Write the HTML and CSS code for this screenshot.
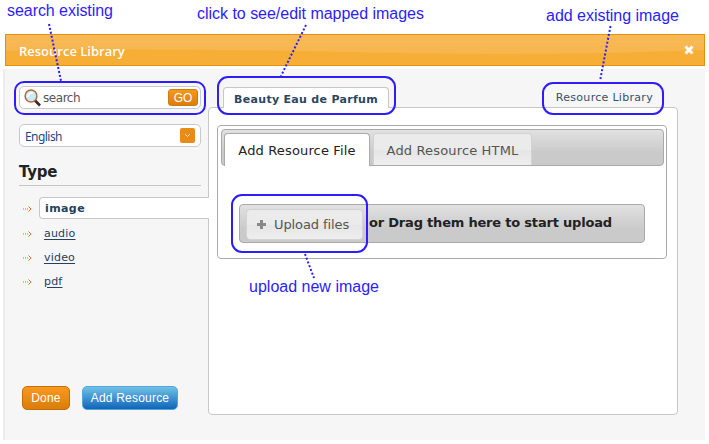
FILE: index.html
```html
<!DOCTYPE html>
<html lang="en">
<head>
<meta charset="utf-8">
<title>Resource Library</title>
<link rel="stylesheet" href="styles.css">
</head>
<body>
<div class="dialog">
  <header class="titlebar">
    <svg class="sheen" viewBox="0 0 698 30" preserveAspectRatio="none"><path d="M0 16Q100 12 340 17Q520 22 698 15V30H0z" fill="#f6ae37"/></svg>
    <h1>Resource Library</h1>
    <svg class="close" width="10" height="10" viewBox="0 0 10 10"><path d="M1.500 1.500l7 7M8.500 1.500l-7 7" stroke="#fff" stroke-width="2.900"/></svg>
  </header>
  <div class="body">
    <aside class="sidebar">
      <div class="field search">
        <svg width="18" height="18" viewBox="0 0 18 18"><path d="M10.500 11l5.500 5.500" stroke="#3b2a24" stroke-width="2.600"/><circle cx="7" cy="7" r="5.900" fill="#c8ebfa" stroke="#b5683f" stroke-width="1.500"/><path d="M4 8a4 4 0 0 1 5-4" stroke="#fff" stroke-width="2" fill="none"/></svg>
        <span class="query">search</span>
        <button class="go">GO</button>
      </div>
      <div class="field language">
        <span>English</span>
        <i class="drop"><svg width="7" height="5" viewBox="0 0 7 5"><path d="M1 1l2.500 2.500L6 1" stroke="#ffe3b5" fill="none"/></svg></i>
      </div>
      <h2>Type</h2>
      <ul class="types">
        <li class="active"><svg class="arrow" viewBox="0 0 9 6"><path d="M0 3h6" stroke-dasharray="1 1"/><path d="M5.500 .500L8 3 5.500 5.500"/></svg><a>image</a></li>
        <li><svg class="arrow" viewBox="0 0 9 6"><path d="M0 3h6" stroke-dasharray="1 1"/><path d="M5.500 .500L8 3 5.500 5.500"/></svg><a>audio</a></li>
        <li><svg class="arrow" viewBox="0 0 9 6"><path d="M0 3h6" stroke-dasharray="1 1"/><path d="M5.500 .500L8 3 5.500 5.500"/></svg><a>video</a></li>
        <li><svg class="arrow" viewBox="0 0 9 6"><path d="M0 3h6" stroke-dasharray="1 1"/><path d="M5.500 .500L8 3 5.500 5.500"/></svg><a>pdf</a></li>
      </ul>
      <div class="actions">
        <button class="done"><span>Done</span></button>
        <button class="add"><span>Add Resource</span></button>
      </div>
    </aside>
    <main class="main">
      <nav class="tabs">
        <a class="tab"><span>Beauty Eau de Parfum</span></a>
        <a class="library"><span>Resource Library</span></a>
      </nav>
      <section class="panel">
        <div class="uploader">
          <div class="inner-tabs">
            <a class="current"><span>Add Resource File</span></a>
            <a class="idle"><span>Add Resource HTML</span></a>
          </div>
          <div class="dropbar">
            <button class="upload"><svg width="9" height="9" viewBox="0 0 9 9"><path d="M4.500 0v9M0 4.500h9" stroke="#888" stroke-width="3"/></svg><span>Upload files</span></button>
            <strong><span>or Drag them here to start upload</span></strong>
          </div>
        </div>
      </section>
    </main>
  </div>
</div>
<svg class="notes" width="709" height="444" viewBox="0 0 709 444">
  <g class="rings">
    <rect x="15" y="82" width="190" height="32" rx="9"/>
    <rect x="218" y="77" width="177" height="37" rx="10"/>
    <rect x="543" y="83" width="120" height="31" rx="10"/>
    <rect x="232" y="195" width="135" height="57" rx="10"/>
  </g>
  <g class="leads">
    <path d="M49 24L61 81"/><path d="M306 25L281 76"/><path d="M610.500 26L600 81"/><path d="M305 254L314 278"/>
  </g>
  <text x="7" y="16" textLength="106">search existing</text>
  <text x="197" y="19" textLength="227">click to see/edit mapped images</text>
  <text x="546" y="21" textLength="133">add existing image</text>
  <text x="249" y="292" textLength="130">upload new image</text>
</svg>
</body>
</html>
```
FILE: styles.css
```css
* { box-sizing: border-box; }
body {
  margin: 0;
  width: 709px;
  height: 444px;
  overflow: hidden;
  background: #fff;
  font-family: "DejaVu Sans", sans-serif;
  font-size: 11px;
  color: #222;
}
span { white-space: nowrap; }
button { padding: 0; }
.dialog { padding: 34px 4px 0 3px; }
.titlebar {
  position: relative;
  display: flex;
  align-items: center;
  justify-content: space-between;
  height: 32px;
  margin: 0 0 0 2px;
  padding: 0 10px 0 13px;
  border: 1px solid #e78f08;
  background: linear-gradient(#f8ba56, #f6b348);
}
.sheen { position: absolute; left: 0; top: 0; width: 100%; height: 100%; }
h1 {
  position: relative;
  margin: 0;
  padding-top: 1px;
  font: 600 13px "Open Sans", sans-serif;
  letter-spacing: 0;
  color: #fff;
}
.close { position: relative; }
.body {
  display: flex;
  height: 371px;
  margin-top: 3px;
  border-left: 2px solid #ececec;
  background: #f6f6f6;
}
.sidebar { position: relative; z-index: 1; width: 204px; padding: 17px 0 0 14px; }
.field {
  display: flex;
  align-items: center;
  width: 182px;
  height: 23px;
  border: 1px solid #c6c9d2;
  border-radius: 5px;
  background: #fff;
}
.search { padding: 0 2px 0 4px; }
.query { flex: 1; padding-left: 1px; font: 12px "DejaVu Sans", sans-serif; letter-spacing: -.45px; color: #555; }
.go {
  width: 30px;
  height: 17px;
  border: 1px solid #cf7b0c;
  border-radius: 3px;
  background: linear-gradient(#f49820, #db7f0b);
  color: #fff;
  font: 12px "Liberation Sans", sans-serif;
}
.language { justify-content: space-between; margin-top: 15px; padding: 0 5px; color: #1b4c7e; font: 12px "Noto Sans", sans-serif; letter-spacing: -.55px; }
.language span { padding-top: 1px; }
.drop { display: grid; place-items: center; width: 15px; height: 15px; border-radius: 2px; background: #e98c16; }
h2 {
  width: 182px;
  height: 22px;
  margin: 17px 0 0;
  border-bottom: 1px solid #c7c7c7;
  font-size: 15px;
  letter-spacing: -.2px;
  line-height: 17px;
}
.types { margin: 10px 0 0; padding: 0; list-style: none; }
.types li { display: flex; align-items: center; height: 24px; padding-left: 4px; }
.types a { margin-left: 12px; color: #244162; letter-spacing: .2px; text-decoration: underline; text-underline-offset: 2px; }
.arrow { width: 9px; height: 6px; margin-top: 2px; fill: none; stroke: #ed6b25; }
.types .active { margin-bottom: 1px; }
.types .active a {
  flex: 1;
  height: 22px;
  margin-left: 7px;
  padding-left: 5px;
  border: 1px solid #c7c7c7;
  border-right: 0;
  border-radius: 4px 0 0 4px;
  background: #fff;
  font-weight: bold;
  letter-spacing: .4px;
  line-height: 21px;
  text-decoration: none;
}
.actions { display: flex; gap: 12px; margin: 93px 0 0 3px; }
.actions button {
  height: 24px;
  border-radius: 5px;
  color: #fff;
  font: 12px "Liberation Sans", sans-serif;
  letter-spacing: .2px;
}
.done { width: 48px; border: 1px solid #c66f08; background: linear-gradient(#fa981d, #d87e0d); }
.add { width: 96px; border: 1px solid #4fa8dc; background: linear-gradient(#6fc1e7, #1165b9); }
.main { width: 470px; margin-left: -1px; padding-top: 18px; }
.tabs { display: flex; justify-content: space-between; height: 20px; padding: 0 25px 0 15px; }
.tab {
  position: relative;
  width: 166px;
  height: 21px;
  border: 1px solid #c7c7c7;
  border-bottom: 0;
  border-radius: 4px 4px 0 0;
  background: #fff;
  text-align: center;
  font-weight: bold;
  letter-spacing: .3px;
  line-height: 23px;
  color: #2d465f;
}
.library { line-height: 21px; letter-spacing: .3px; color: #36506a; }
.panel { height: 308px; padding: 17px 9px; border: 1px solid #c7c7c7; border-radius: 4px; background: #fff; }
.uploader { width: 450px; height: 134px; margin-left: -1px; padding: 3px 2px 3px 3px; border: 1px solid #aaa; border-radius: 4px; }
.inner-tabs {
  display: flex;
  gap: 3px;
  height: 37px;
  padding: 3px 2px 0;
  border: 1px solid #aaa;
  border-radius: 4px;
  background: linear-gradient(#e1e1e1, #cacaca 65%);
  font-size: 13px;
  letter-spacing: .15px;
}
.inner-tabs a { text-align: center; line-height: 34px; border-radius: 4px 4px 0 0; }
.current { width: 146px; height: 33px; border: 1px solid #aaa; border-bottom: 0; background: #fff; }
.idle { width: 159px; height: 32px; border: 1px solid #d3d3d3; border-bottom: 0; background: linear-gradient(#ebebeb 50%, #e5e5e5 51%, #eee); color: #555; }
.dropbar {
  display: flex;
  width: 406px;
  height: 39px;
  margin: 38px 0 0 18px;
  padding: 4px 6px;
  border: 1px solid #aaa;
  border-radius: 4px;
  background: linear-gradient(#e1e1e1, #cacaca 65%);
}
.upload {
  display: flex;
  align-items: center;
  width: 117px;
  height: 31px;
  padding-left: 10px;
  gap: 8px;
  border: 1px solid #d3d3d3;
  border-radius: 4px;
  background: linear-gradient(#ebebeb 50%, #e5e5e5 51%, #eee);
  color: #555;
  font: 13px "DejaVu Sans", sans-serif;
  letter-spacing: -.1px;
}
.dropbar strong { margin-left: 6px; font-size: 13px; letter-spacing: -.2px; line-height: 27px; }
.notes { position: absolute; left: 0; top: 0; fill: none; stroke: #2d1dfd; }
.rings { stroke-width: 2; }
.leads { stroke-width: 2; stroke-dasharray: 2 2; }
.notes text { fill: #2d1dfd; stroke: none; font: 16px "Liberation Sans", sans-serif; }
```
